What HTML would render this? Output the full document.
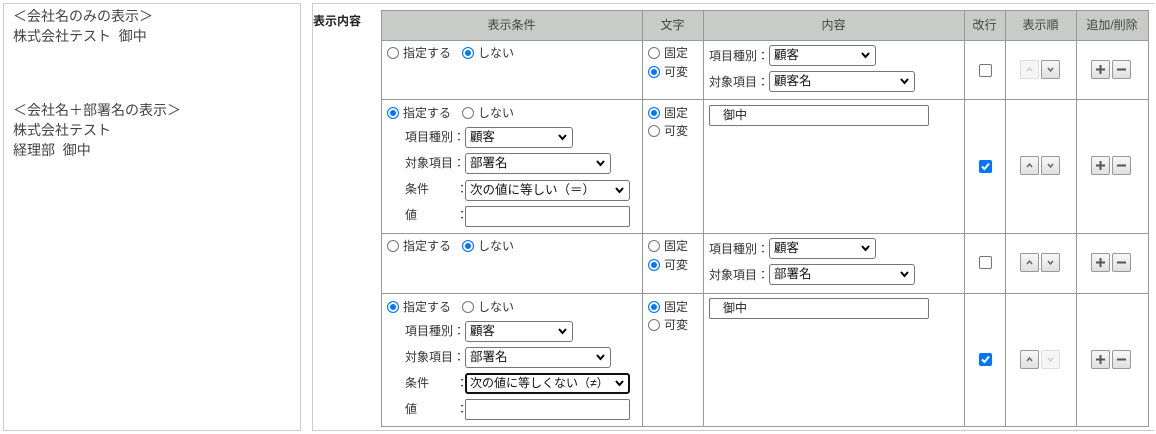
<!DOCTYPE html>
<html><head><meta charset="utf-8"><style>
*{box-sizing:border-box;margin:0;padding:0}
body{width:1156px;height:434px;background:#fff;position:relative;overflow:hidden;font-family:"Liberation Sans","Noto Sans CJK JP",sans-serif;color:#333}
.a{position:absolute}
.t{position:absolute;font-size:12px;line-height:14px;white-space:nowrap;color:#333}
.r{position:absolute;width:12px;height:12px;border:1px solid #767676;border-radius:50%;background:#fff}
.r.c{border:1.5px solid #0075ff;background:#0075ff;box-shadow:inset 0 0 0 2px #fff}
.s{position:absolute;height:21px;border:1px solid #767676;border-radius:3px;background:#fff;font-size:12.5px;line-height:19px;padding-left:4px;color:#111;white-space:nowrap}
.s svg{position:absolute;right:5px;top:6px}
.i{position:absolute;height:21px;border:1px solid #767676;border-radius:2px;background:#fff;font-size:12px;line-height:19px;padding-left:13px;color:#222}
.cb{position:absolute;width:13px;height:13px;border:1px solid #767676;border-radius:2px;background:#fff}
.cb.c{background:#0075ff;border-color:#0075ff}
.b{position:absolute;width:19px;height:19px;border:1px solid #999;border-radius:2px;background:linear-gradient(#f8f8f8,#e0e0e0)}
.b.d{border-color:#ddd;background:#f5f5f5}
.b svg{position:absolute;left:4px;top:4px}
.h{position:absolute;top:10px;height:30px;background:#c8ccc8;font-size:12px;line-height:30px;text-align:center;color:#444}
.vl{position:absolute;width:1px;background:#999;top:10px;height:417px}
.hl{position:absolute;height:1px;background:#999;left:381px;width:768px}
.lt{position:absolute;left:13px;font-size:14px;line-height:20px;color:#444;white-space:nowrap}
</style></head><body>
<div class="a" style="left:3px;top:3px;width:298px;height:428px;border:1px solid #ccc"></div>
<div class="a" style="left:312px;top:3px;width:842px;height:428px;border:1px solid #ccc;border-right:none"></div>
<div class="lt" style="top:6px">＜会社名のみの表示＞<br>株式会社テスト&nbsp;&nbsp;御中</div>
<div class="lt" style="top:100px">＜会社名＋部署名の表示＞<br>株式会社テスト<br>経理部&nbsp;&nbsp;御中</div>
<div class="t" style="left:313px;top:14px;font-weight:bold;color:#222">表示内容</div>

<div class="h" style="left:381px;width:261px">表示条件</div>
<div class="h" style="left:642px;width:61px">文字</div>
<div class="h" style="left:703px;width:261px">内容</div>
<div class="h" style="left:964px;width:41px">改行</div>
<div class="h" style="left:1005px;width:71px">表示順</div>
<div class="h" style="left:1076px;width:72px">追加/削除</div>
<div class="vl" style="left:381px"></div><div class="vl" style="left:642px"></div><div class="vl" style="left:703px"></div><div class="vl" style="left:964px"></div><div class="vl" style="left:1005px"></div><div class="vl" style="left:1076px"></div><div class="vl" style="left:1148px"></div>
<div class="hl" style="top:10px"></div><div class="hl" style="top:40px"></div><div class="hl" style="top:99px"></div><div class="hl" style="top:233px"></div><div class="hl" style="top:293px"></div><div class="hl" style="top:426px"></div>

<!-- row1 -->
<div class="r" style="left:387px;top:47px"></div><div class="t" style="left:403px;top:46px">指定する</div>
<div class="r c" style="left:462px;top:47px"></div><div class="t" style="left:478px;top:46px">しない</div>
<div class="r" style="left:648px;top:47px"></div><div class="t" style="left:664px;top:46px">固定</div>
<div class="r c" style="left:648px;top:66px"></div><div class="t" style="left:664px;top:65px">可変</div>
<div class="t" style="left:709px;top:49px">項目種別：</div><div class="s" style="left:769px;top:45px;width:107px">顧客<svg width="9" height="7"><path d="M1 1l3.5 4L8 1" stroke="#000" stroke-width="2" fill="none"/></svg></div>
<div class="t" style="left:709px;top:75px">対象項目：</div><div class="s" style="left:769px;top:71px;width:146px">顧客名<svg width="9" height="7"><path d="M1 1l3.5 4L8 1" stroke="#000" stroke-width="2" fill="none"/></svg></div>
<div class="cb" style="left:979px;top:64px"></div>
<div class="b d" style="left:1020px;top:60px"><svg width="9" height="9"><path d="M2 6l2.5-3L7 6" stroke="#ccc" stroke-width="1.5" fill="none"/></svg></div>
<div class="b" style="left:1041px;top:60px"><svg width="9" height="9"><path d="M2 3l2.5 3L7 3" stroke="#666" stroke-width="1.5" fill="none"/></svg></div>
<div class="b" style="left:1091px;top:60px"><svg width="9" height="9"><path d="M4.5 0v9M0 4.5h9" stroke="#555" stroke-width="2"/></svg></div>
<div class="b" style="left:1112px;top:60px"><svg width="9" height="9"><path d="M0 4.5h9" stroke="#555" stroke-width="2"/></svg></div>

<!-- row2 -->
<div class="r c" style="left:387px;top:107px"></div><div class="t" style="left:403px;top:106px">指定する</div>
<div class="r" style="left:462px;top:107px"></div><div class="t" style="left:478px;top:106px">しない</div>
<div class="t" style="left:405px;top:130px">項目種別：</div><div class="s" style="left:465px;top:127px;width:108px">顧客<svg width="9" height="7"><path d="M1 1l3.5 4L8 1" stroke="#000" stroke-width="2" fill="none"/></svg></div>
<div class="t" style="left:405px;top:156px">対象項目：</div><div class="s" style="left:465px;top:153px;width:146px">部署名<svg width="9" height="7"><path d="M1 1l3.5 4L8 1" stroke="#000" stroke-width="2" fill="none"/></svg></div>
<div class="t" style="left:405px;top:182px">条件</div><div class="t" style="left:456px;top:182px">：</div><div class="s" style="left:465px;top:180px;width:165px">次の値に等しい（＝）<svg width="9" height="7"><path d="M1 1l3.5 4L8 1" stroke="#000" stroke-width="2" fill="none"/></svg></div>
<div class="t" style="left:405px;top:208px">値</div><div class="t" style="left:456px;top:208px">：</div><div class="i" style="left:465px;top:206px;width:165px"></div>
<div class="r c" style="left:648px;top:107px"></div><div class="t" style="left:664px;top:106px">固定</div>
<div class="r" style="left:648px;top:125px"></div><div class="t" style="left:664px;top:124px">可変</div>
<div class="i" style="left:709px;top:105px;width:220px">御中</div>
<div class="cb c" style="left:979px;top:160px"><svg width="11" height="11" style="position:absolute;left:0;top:0"><path d="M2 5.5l2.5 2.5L9 2.5" stroke="#fff" stroke-width="2" fill="none"/></svg></div>
<div class="b" style="left:1020px;top:156px"><svg width="9" height="9"><path d="M2 6l2.5-3L7 6" stroke="#666" stroke-width="1.5" fill="none"/></svg></div>
<div class="b" style="left:1041px;top:156px"><svg width="9" height="9"><path d="M2 3l2.5 3L7 3" stroke="#666" stroke-width="1.5" fill="none"/></svg></div>
<div class="b" style="left:1091px;top:156px"><svg width="9" height="9"><path d="M4.5 0v9M0 4.5h9" stroke="#555" stroke-width="2"/></svg></div>
<div class="b" style="left:1112px;top:156px"><svg width="9" height="9"><path d="M0 4.5h9" stroke="#555" stroke-width="2"/></svg></div>

<!-- row3 -->
<div class="r" style="left:387px;top:240px"></div><div class="t" style="left:403px;top:239px">指定する</div>
<div class="r c" style="left:462px;top:240px"></div><div class="t" style="left:478px;top:239px">しない</div>
<div class="r" style="left:648px;top:240px"></div><div class="t" style="left:664px;top:239px">固定</div>
<div class="r c" style="left:648px;top:259px"></div><div class="t" style="left:664px;top:258px">可変</div>
<div class="t" style="left:709px;top:242px">項目種別：</div><div class="s" style="left:769px;top:238px;width:107px">顧客<svg width="9" height="7"><path d="M1 1l3.5 4L8 1" stroke="#000" stroke-width="2" fill="none"/></svg></div>
<div class="t" style="left:709px;top:268px">対象項目：</div><div class="s" style="left:769px;top:264px;width:146px">部署名<svg width="9" height="7"><path d="M1 1l3.5 4L8 1" stroke="#000" stroke-width="2" fill="none"/></svg></div>
<div class="cb" style="left:979px;top:256px"></div>
<div class="b" style="left:1020px;top:253px"><svg width="9" height="9"><path d="M2 6l2.5-3L7 6" stroke="#666" stroke-width="1.5" fill="none"/></svg></div>
<div class="b" style="left:1041px;top:253px"><svg width="9" height="9"><path d="M2 3l2.5 3L7 3" stroke="#666" stroke-width="1.5" fill="none"/></svg></div>
<div class="b" style="left:1091px;top:253px"><svg width="9" height="9"><path d="M4.5 0v9M0 4.5h9" stroke="#555" stroke-width="2"/></svg></div>
<div class="b" style="left:1112px;top:253px"><svg width="9" height="9"><path d="M0 4.5h9" stroke="#555" stroke-width="2"/></svg></div>

<!-- row4 -->
<div class="r c" style="left:387px;top:301px"></div><div class="t" style="left:403px;top:300px">指定する</div>
<div class="r" style="left:462px;top:301px"></div><div class="t" style="left:478px;top:300px">しない</div>
<div class="t" style="left:405px;top:324px">項目種別：</div><div class="s" style="left:465px;top:321px;width:108px">顧客<svg width="9" height="7"><path d="M1 1l3.5 4L8 1" stroke="#000" stroke-width="2" fill="none"/></svg></div>
<div class="t" style="left:405px;top:350px">対象項目：</div><div class="s" style="left:465px;top:347px;width:146px">部署名<svg width="9" height="7"><path d="M1 1l3.5 4L8 1" stroke="#000" stroke-width="2" fill="none"/></svg></div>
<div class="t" style="left:405px;top:376px">条件</div><div class="t" style="left:456px;top:376px">：</div><div class="s" style="left:465px;top:373px;width:165px;border:2px solid #111;line-height:17px;padding-left:3px;font-size:12px;overflow:hidden">次の値に等しくない（≠）<svg width="9" height="7" style="right:4px;top:5px;background:#fff"><path d="M1 1l3.5 4L8 1" stroke="#000" stroke-width="2" fill="none"/></svg></div>
<div class="t" style="left:405px;top:402px">値</div><div class="t" style="left:456px;top:402px">：</div><div class="i" style="left:465px;top:399px;width:165px"></div>
<div class="r c" style="left:648px;top:301px"></div><div class="t" style="left:664px;top:300px">固定</div>
<div class="r" style="left:648px;top:319px"></div><div class="t" style="left:664px;top:318px">可変</div>
<div class="i" style="left:709px;top:298px;width:220px">御中</div>
<div class="cb c" style="left:979px;top:353px"><svg width="11" height="11" style="position:absolute;left:0;top:0"><path d="M2 5.5l2.5 2.5L9 2.5" stroke="#fff" stroke-width="2" fill="none"/></svg></div>
<div class="b" style="left:1020px;top:350px"><svg width="9" height="9"><path d="M2 6l2.5-3L7 6" stroke="#666" stroke-width="1.5" fill="none"/></svg></div>
<div class="b d" style="left:1041px;top:350px"><svg width="9" height="9"><path d="M2 3l2.5 3L7 3" stroke="#ccc" stroke-width="1.5" fill="none"/></svg></div>
<div class="b" style="left:1091px;top:350px"><svg width="9" height="9"><path d="M4.5 0v9M0 4.5h9" stroke="#555" stroke-width="2"/></svg></div>
<div class="b" style="left:1112px;top:350px"><svg width="9" height="9"><path d="M0 4.5h9" stroke="#555" stroke-width="2"/></svg></div>
</body></html>
